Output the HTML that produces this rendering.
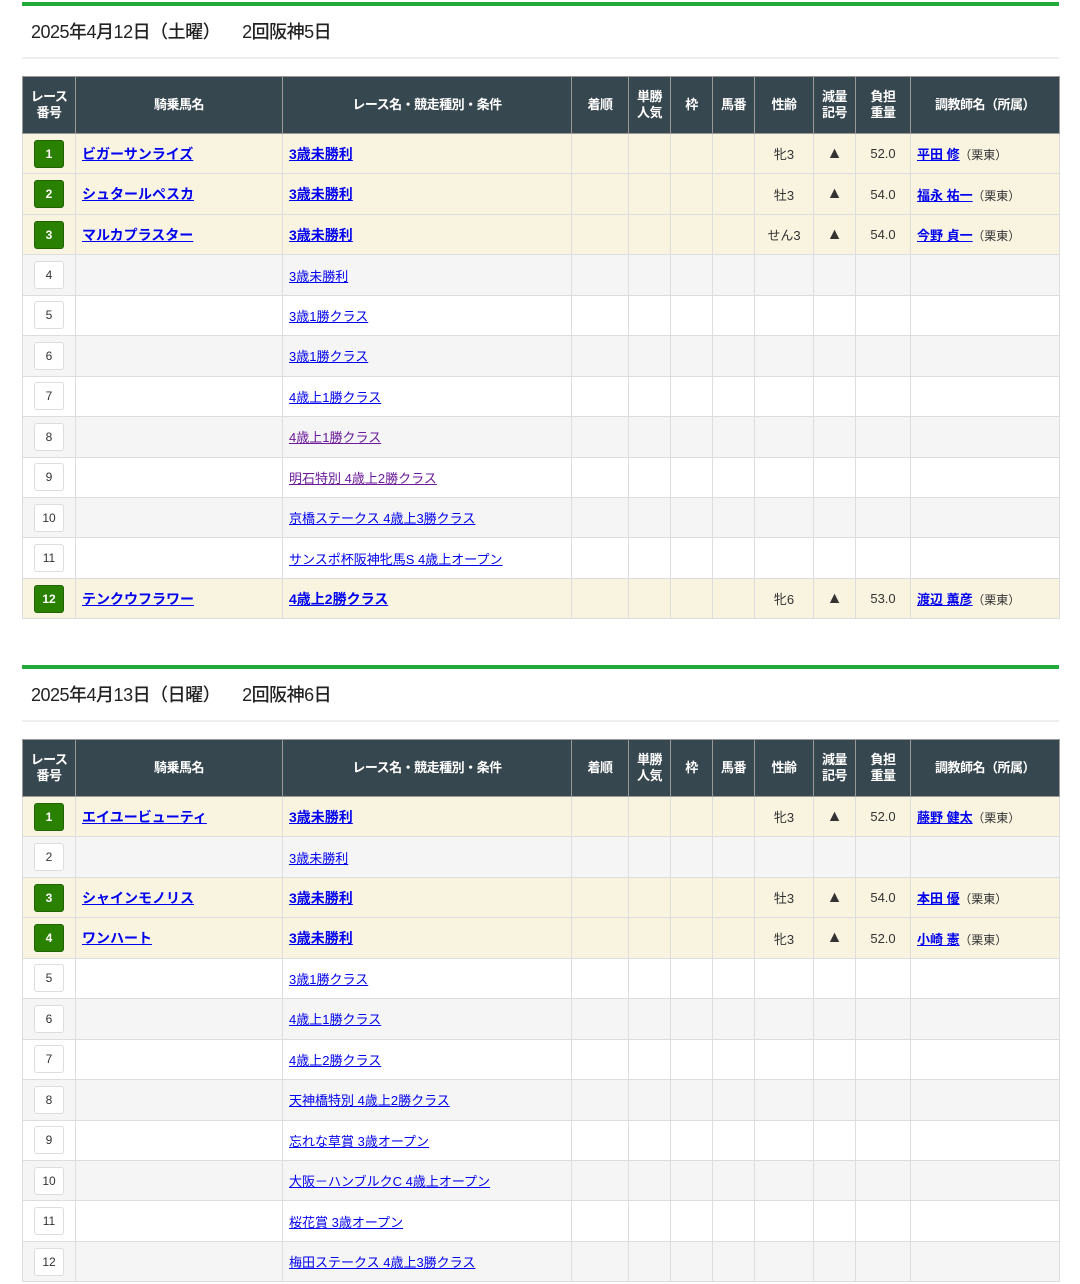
<!DOCTYPE html>
<html><head><meta charset="utf-8">
<style>
*{box-sizing:border-box;margin:0;padding:0}
body{width:1080px;height:1284px;background:#fff;font-family:"Liberation Sans","Noto Sans CJK JP",sans-serif;color:#333;overflow:hidden;position:relative}
.sec{position:absolute;left:22px;width:1037px}
.bar{height:4px;background:#22aa3a}
.title{height:53px;border-bottom:2px solid #eee;font-size:18px;line-height:53px;padding-left:9px;color:#222;letter-spacing:-0.5px;font-weight:500}
.title span{margin-left:22px}
table{border-collapse:collapse;width:1037px;margin-top:17px;table-layout:fixed}
th{background:#37474f;color:#fff;font-size:13px;font-weight:bold;border:1px solid #999;height:57px;line-height:16px;letter-spacing:-0.5px}
td{border:1px solid #ddd;height:40.45px;font-size:13px;text-align:center;color:#333}
tr.g td{background:#f5f5f5}
tr.w td{background:#fff}
tr.h td{background:#f8f4e0}
td.l{text-align:left;padding-left:6px}
a{color:#00e;text-decoration:underline}
a.v{color:#6a1a9a}
tr.h a{font-weight:bold;font-size:14px}
tr.h td.r a{font-size:13px}
.n{display:inline-block;width:30px;height:28px;line-height:26px;border-radius:3px;font-size:12px}
tr.h .n{background:#2a8000;color:#fff;font-weight:bold;border:1px solid #1f6400}
tr.g .n,tr.w .n{background:#fff;border:1px solid #ddd;color:#333}
.s{font-size:12px;margin-left:-4px}
.t{font-size:16px}
</style></head><body>

<div class="sec" style="top:2px">
<div class="bar"></div>
<div class="title">2025年4月12日（土曜）<span>2回阪神5日</span></div>
<table>
<colgroup><col style="width:53px"><col style="width:207px"><col style="width:289px"><col style="width:57px"><col style="width:42px"><col style="width:42px"><col style="width:42px"><col style="width:59px"><col style="width:42px"><col style="width:55px"><col style="width:149px"></colgroup>
<tr><th>レース<br>番号</th><th>騎乗馬名</th><th>レース名・競走種別・条件</th><th>着順</th><th>単勝<br>人気</th><th>枠</th><th>馬番</th><th>性齢</th><th>減量<br>記号</th><th>負担<br>重量</th><th>調教師名（所属）</th></tr>
<tr class="h"><td><span class="n">1</span></td><td class="l"><a>ビガーサンライズ</a></td><td class="l"><a>3歳未勝利</a></td><td></td><td></td><td></td><td></td><td>牝3</td><td class="t">▲</td><td>52.0</td><td class="l r"><a>平田 修</a> <span class="s">（栗東）</span></td></tr>
<tr class="h"><td><span class="n">2</span></td><td class="l"><a>シュタールペスカ</a></td><td class="l"><a>3歳未勝利</a></td><td></td><td></td><td></td><td></td><td>牡3</td><td class="t">▲</td><td>54.0</td><td class="l r"><a>福永 祐一</a> <span class="s">（栗東）</span></td></tr>
<tr class="h"><td><span class="n">3</span></td><td class="l"><a>マルカプラスター</a></td><td class="l"><a>3歳未勝利</a></td><td></td><td></td><td></td><td></td><td>せん3</td><td class="t">▲</td><td>54.0</td><td class="l r"><a>今野 貞一</a> <span class="s">（栗東）</span></td></tr>
<tr class="g"><td><span class="n">4</span></td><td></td><td class="l"><a>3歳未勝利</a></td><td></td><td></td><td></td><td></td><td></td><td></td><td></td><td></td></tr>
<tr class="w"><td><span class="n">5</span></td><td></td><td class="l"><a>3歳1勝クラス</a></td><td></td><td></td><td></td><td></td><td></td><td></td><td></td><td></td></tr>
<tr class="g"><td><span class="n">6</span></td><td></td><td class="l"><a>3歳1勝クラス</a></td><td></td><td></td><td></td><td></td><td></td><td></td><td></td><td></td></tr>
<tr class="w"><td><span class="n">7</span></td><td></td><td class="l"><a>4歳上1勝クラス</a></td><td></td><td></td><td></td><td></td><td></td><td></td><td></td><td></td></tr>
<tr class="g"><td><span class="n">8</span></td><td></td><td class="l"><a class="v">4歳上1勝クラス</a></td><td></td><td></td><td></td><td></td><td></td><td></td><td></td><td></td></tr>
<tr class="w"><td><span class="n">9</span></td><td></td><td class="l"><a class="v">明石特別 4歳上2勝クラス</a></td><td></td><td></td><td></td><td></td><td></td><td></td><td></td><td></td></tr>
<tr class="g"><td><span class="n">10</span></td><td></td><td class="l"><a>京橋ステークス 4歳上3勝クラス</a></td><td></td><td></td><td></td><td></td><td></td><td></td><td></td><td></td></tr>
<tr class="w"><td><span class="n">11</span></td><td></td><td class="l"><a>サンスポ杯阪神牝馬S 4歳上オープン</a></td><td></td><td></td><td></td><td></td><td></td><td></td><td></td><td></td></tr>
<tr class="h"><td><span class="n">12</span></td><td class="l"><a>テンクウフラワー</a></td><td class="l"><a>4歳上2勝クラス</a></td><td></td><td></td><td></td><td></td><td>牝6</td><td class="t">▲</td><td>53.0</td><td class="l r"><a>渡辺 薫彦</a> <span class="s">（栗東）</span></td></tr>
</table>
</div>

<div class="sec" style="top:665px">
<div class="bar"></div>
<div class="title">2025年4月13日（日曜）<span>2回阪神6日</span></div>
<table>
<colgroup><col style="width:53px"><col style="width:207px"><col style="width:289px"><col style="width:57px"><col style="width:42px"><col style="width:42px"><col style="width:42px"><col style="width:59px"><col style="width:42px"><col style="width:55px"><col style="width:149px"></colgroup>
<tr><th>レース<br>番号</th><th>騎乗馬名</th><th>レース名・競走種別・条件</th><th>着順</th><th>単勝<br>人気</th><th>枠</th><th>馬番</th><th>性齢</th><th>減量<br>記号</th><th>負担<br>重量</th><th>調教師名（所属）</th></tr>
<tr class="h"><td><span class="n">1</span></td><td class="l"><a>エイユービューティ</a></td><td class="l"><a>3歳未勝利</a></td><td></td><td></td><td></td><td></td><td>牝3</td><td class="t">▲</td><td>52.0</td><td class="l r"><a>藤野 健太</a> <span class="s">（栗東）</span></td></tr>
<tr class="g"><td><span class="n">2</span></td><td></td><td class="l"><a>3歳未勝利</a></td><td></td><td></td><td></td><td></td><td></td><td></td><td></td><td></td></tr>
<tr class="h"><td><span class="n">3</span></td><td class="l"><a>シャインモノリス</a></td><td class="l"><a>3歳未勝利</a></td><td></td><td></td><td></td><td></td><td>牡3</td><td class="t">▲</td><td>54.0</td><td class="l r"><a>本田 優</a> <span class="s">（栗東）</span></td></tr>
<tr class="h"><td><span class="n">4</span></td><td class="l"><a>ワンハート</a></td><td class="l"><a>3歳未勝利</a></td><td></td><td></td><td></td><td></td><td>牝3</td><td class="t">▲</td><td>52.0</td><td class="l r"><a>小崎 憲</a> <span class="s">（栗東）</span></td></tr>
<tr class="w"><td><span class="n">5</span></td><td></td><td class="l"><a>3歳1勝クラス</a></td><td></td><td></td><td></td><td></td><td></td><td></td><td></td><td></td></tr>
<tr class="g"><td><span class="n">6</span></td><td></td><td class="l"><a>4歳上1勝クラス</a></td><td></td><td></td><td></td><td></td><td></td><td></td><td></td><td></td></tr>
<tr class="w"><td><span class="n">7</span></td><td></td><td class="l"><a>4歳上2勝クラス</a></td><td></td><td></td><td></td><td></td><td></td><td></td><td></td><td></td></tr>
<tr class="g"><td><span class="n">8</span></td><td></td><td class="l"><a>天神橋特別 4歳上2勝クラス</a></td><td></td><td></td><td></td><td></td><td></td><td></td><td></td><td></td></tr>
<tr class="w"><td><span class="n">9</span></td><td></td><td class="l"><a>忘れな草賞 3歳オープン</a></td><td></td><td></td><td></td><td></td><td></td><td></td><td></td><td></td></tr>
<tr class="g"><td><span class="n">10</span></td><td></td><td class="l"><a>大阪－ハンブルクC 4歳上オープン</a></td><td></td><td></td><td></td><td></td><td></td><td></td><td></td><td></td></tr>
<tr class="w"><td><span class="n">11</span></td><td></td><td class="l"><a>桜花賞 3歳オープン</a></td><td></td><td></td><td></td><td></td><td></td><td></td><td></td><td></td></tr>
<tr class="g"><td><span class="n">12</span></td><td></td><td class="l"><a>梅田ステークス 4歳上3勝クラス</a></td><td></td><td></td><td></td><td></td><td></td><td></td><td></td><td></td></tr>
</table>
</div>
</body></html>
